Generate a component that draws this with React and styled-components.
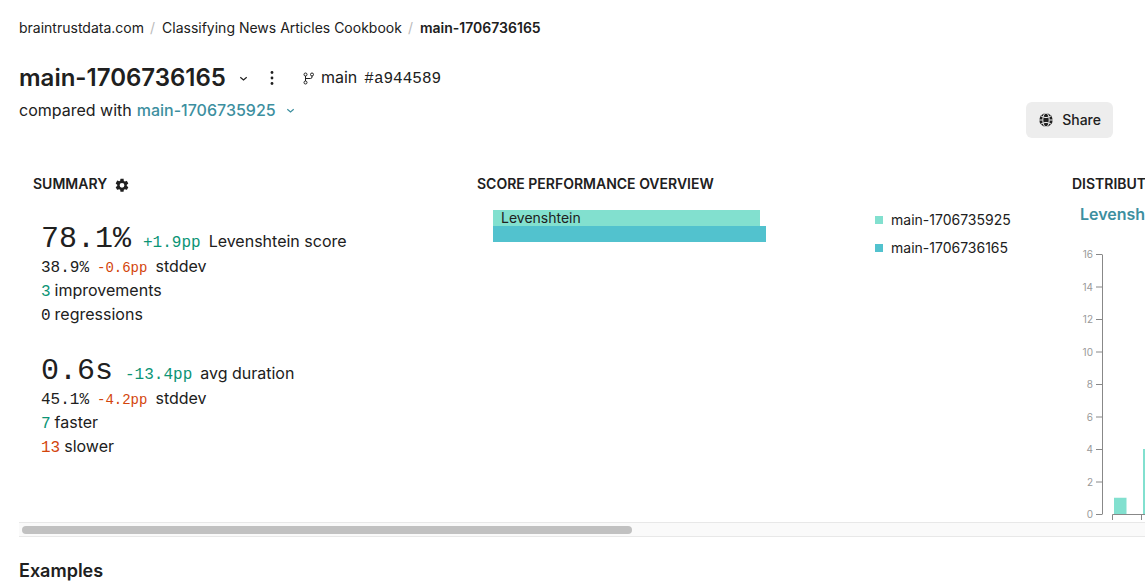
import React from "react";
import styled, { createGlobalStyle } from "styled-components";

const Global = createGlobalStyle`
  *, *::before, *::after { box-sizing: border-box; }
  body {
    margin: 0;
    background: #fff;
    color: #202020;
    font-family: Inter, sans-serif;
    font-size: 16px;
    line-height: 24px;
    overflow-x: hidden;
  }
  h1, h2, h3, p, ol, ul { margin: 0; padding: 0; }
  button { font: inherit; color: inherit; border: 0; background: none; padding: 0; cursor: pointer; }
  svg { display: block; flex: none; }
`;

const Page = styled.main`
  padding: 16px 0 0 19px;
`;

const Breadcrumb = styled.ol`
  display: flex;
  gap: 6px;
  list-style: none;
  font-size: 14px;
  line-height: 24px;
`;

const Crumb = styled.li`
  display: flex;
  gap: 7px;
  font-weight: ${(p) => (p.$current ? 600 : 400)};
  a { color: inherit; text-decoration: none; }
  &:not(:first-child)::before { content: "/"; color: #bbb; font-weight: 400; }
`;

const Header = styled.header`
  display: flex;
  justify-content: space-between;
  align-items: flex-end;
  padding: 20px 32px 0 0;
`;

const TitleRow = styled.div`
  display: flex;
  align-items: center;
  height: 36px;
`;

const Title = styled.h1`
  margin-right: 4px;
  font-size: 24px;
  line-height: 32px;
  font-weight: 600;
`;

const IconButton = styled.button`
  display: flex;
  align-items: center;
  justify-content: center;
  width: 28px;
  height: 28px;
`;

const Branch = styled.div`
  display: flex;
  align-items: center;
  gap: 6px;
  margin-left: 17px;
`;

const BranchText = styled.span`
  display: flex;
  align-items: baseline;
  gap: 7px;
`;

const Mono = styled.span`
  font-family: "Liberation Mono", monospace;
  font-size: ${(p) => p.$size || 16}px;
  color: ${(p) => ({ good: "#0b9475", bad: "#d3450c" })[p.$tone] || "inherit"};
`;

const Compared = styled.div`
  display: flex;
  align-items: center;
  gap: 5px;
  height: 28px;
  margin-bottom: 14px;
`;

const CompareButton = styled.button`
  display: flex;
  align-items: center;
  gap: 10px;
  color: #3d8f9f;
  font-weight: 500;
`;

const ShareButton = styled.button`
  display: flex;
  align-items: center;
  gap: 9px;
  height: 36px;
  padding: 0 12px 0 13px;
  border-radius: 6px;
  background: #ededed;
  font-size: 14px;
  font-weight: 500;
`;

const Scroller = styled.section`
  display: flex;
  height: 384px;
  padding: 34px 0 0 14px;
  overflow-x: auto;
  overflow-y: hidden;
  scrollbar-width: none;
`;

const Panel = styled.div`
  flex: none;
  width: ${(p) => p.$width}px;
`;

const PanelTitle = styled.h2`
  display: flex;
  align-items: center;
  gap: 7px;
  font-size: 14px;
  line-height: 24px;
  font-weight: 600;
`;

const Metric = styled.div`
  padding: 28px 8px 0;
  & + & { padding-top: 30px; }
`;

const MetricLine = styled.p`
  display: flex;
  align-items: baseline;
  gap: ${(p) => p.$gap}px;
  height: ${(p) => p.$height || 24}px;
  line-height: ${(p) => p.$height || 24}px;
`;

const Overview = styled.div`
  display: flex;
  gap: 32px;
  padding: 14px 16px 0;
`;

const Bars = styled.div`
  width: 350px;
`;

const Bar = styled.div`
  height: 16px;
  padding-left: 8px;
  background: ${(p) => p.$color};
  font-size: 14px;
  line-height: 16px;
`;

const Legend = styled.ul`
  display: grid;
  align-content: start;
  gap: 4px;
  list-style: none;
  font-size: 14px;
  line-height: 24px;
  margin-top: -2px;
`;

const LegendItem = styled.li`
  display: flex;
  align-items: center;
  gap: 8px;
  &::before { content: ""; width: 8px; height: 8px; background: ${(p) => p.$color}; }
`;

const ChartTitle = styled.h3`
  padding: 6px 8px 16px;
  font-size: 16px;
  line-height: 24px;
  font-weight: 600;
  color: #3d8f9f;
`;

const AxisLabel = styled.text`
  font-size: 10px;
  fill: #999;
  text-anchor: end;
`;

const ScrollTrack = styled.div`
  height: 15px;
  padding: 3px;
  background: #fafafa;
  border: solid #e8e8e8;
  border-width: 1px 0;
`;

const ScrollThumb = styled.div`
  width: 54.5%;
  height: 8px;
  border-radius: 4px;
  background: #c1c1c1;
`;

const SectionTitle = styled.h2`
  padding: 20px 0;
  font-size: 18px;
  line-height: 28px;
  font-weight: 600;
`;

const Chevron = () => (
  <svg width="9" height="9" viewBox="0 0 9 9" fill="none" stroke="currentColor" strokeWidth="1.2">
    <path d="M1.3 3.2l3.2 2.8 3.2-2.8" />
  </svg>
);

const Dots = () => (
  <svg width="4" height="16" viewBox="0 0 4 16" fill="currentColor">
    <circle cx="2" cy="2.5" r="1.4" />
    <circle cx="2" cy="8" r="1.4" />
    <circle cx="2" cy="13.5" r="1.4" />
  </svg>
);

const BranchIcon = () => (
  <svg width="12" height="16" viewBox="0 0 12 16" fill="none" stroke="currentColor">
    <circle cx="2.5" cy="4.5" r="1.5" />
    <circle cx="9" cy="4.5" r="1.5" />
    <circle cx="2.5" cy="12.5" r="1.5" />
    <path d="M2.5 6v5M9 6v1q0 1.5-1.5 1.5h-5" />
  </svg>
);

const Gear = () => (
  <svg width="16" height="18" viewBox="0 -2.5 24 27" fill="currentColor">
    <path
      transform="translate(0 1)"
      d="M19.14 12.94c.04-.3.06-.61.06-.94s-.02-.64-.07-.94l2.03-1.58a.49.49 0 0 0 .12-.61l-1.92-3.32a.49.49 0 0 0-.59-.22l-2.39.96a7 7 0 0 0-1.62-.94l-.36-2.54A.48.48 0 0 0 13.92 2h-3.84a.48.48 0 0 0-.47.41l-.36 2.54c-.59.24-1.13.57-1.62.94l-2.39-.96a.48.48 0 0 0-.59.22L2.74 8.87a.48.48 0 0 0 .12.61l2.03 1.58a6 6 0 0 0 0 1.88l-2.03 1.58a.49.49 0 0 0-.12.61l1.92 3.32c.12.22.37.29.59.22l2.39-.96c.5.38 1.03.7 1.62.94l.36 2.54c.05.24.24.41.48.41h3.84c.24 0 .44-.17.47-.41l.36-2.54a7 7 0 0 0 1.62-.94l2.39.96c.22.08.47 0 .59-.22l1.92-3.32a.48.48 0 0 0-.12-.61zM12 15.6a3.6 3.6 0 1 1 0-7.2 3.6 3.6 0 0 1 0 7.2"
    />
  </svg>
);

const Globe = () => (
  <svg width="14" height="14" viewBox="0 0 14 14">
    <circle cx="7" cy="7" r="6.7" fill="currentColor" />
    <g fill="none" stroke="#ededed" strokeWidth="1">
      <path d="M0 7h3.5M10.5 7H14M1.8 2.8Q7 6.4 12.2 2.8M1.8 11.2Q7 7.6 12.2 11.2" />
      <ellipse cx="7" cy="7" rx="3.2" ry="7" />
    </g>
  </svg>
);

const MINT = "#82e0cf";
const TEAL = "#52c2ce";
const BASE = 272;
const STEP = 16.25;
const TICKS = [0, 2, 4, 6, 8, 10, 12, 14, 16];
const BINS = [1, 4];

const Histogram = () => (
  <svg width="400" height="280" viewBox="0 0 400 280">
    {BINS.map((n, i) => (
      <rect key={i} x={42 + i * 29} y={BASE - n * STEP} width="12.5" height={n * STEP} fill={MINT} />
    ))}
    <path d="M30.5 12.5V272.5M40.5 278V272.5H400M69.5 272V278" fill="none" stroke="#888" />
    {TICKS.map((t) => (
      <g key={t}>
        <path d={`M24 ${BASE + 0.5 - t * STEP}H30`} stroke="#888" />
        <AxisLabel x="21" y={BASE + 4 - t * STEP}>{t}</AxisLabel>
      </g>
    ))}
  </svg>
);

export default function App() {
  return (
    <Page>
      <Global />
      <nav aria-label="Breadcrumb">
        <Breadcrumb>
          <Crumb><a href="#org">braintrustdata.com</a></Crumb>
          <Crumb><a href="#project">Classifying News Articles Cookbook</a></Crumb>
          <Crumb $current>main-1706736165</Crumb>
        </Breadcrumb>
      </nav>
      <Header>
        <div>
          <TitleRow>
            <Title>main-1706736165</Title>
            <IconButton aria-label="Switch experiment"><Chevron /></IconButton>
            <IconButton aria-label="More actions"><Dots /></IconButton>
            <Branch>
              <BranchIcon />
              <BranchText>main <Mono>#a944589</Mono></BranchText>
            </Branch>
          </TitleRow>
          <Compared>
            compared with
            <CompareButton>main-1706735925 <Chevron /></CompareButton>
          </Compared>
        </div>
        <ShareButton><Globe />Share</ShareButton>
      </Header>
      <Scroller>
        <Panel $width={444}>
          <PanelTitle>
            SUMMARY
            <Gear />
          </PanelTitle>
          <Metric>
            <MetricLine $gap={12} $height={30}>
              <Mono $size={30}>78.1%</Mono>
              <MetricLine as="span" $gap={8}><Mono $tone="good">+1.9pp</Mono>Levenshtein score</MetricLine>
            </MetricLine>
            <MetricLine $gap={8}><Mono>38.9%</Mono><Mono $size={14} $tone="bad">-0.6pp</Mono>stddev</MetricLine>
            <MetricLine $gap={4}><Mono $tone="good">3</Mono>improvements</MetricLine>
            <MetricLine $gap={4}><Mono>0</Mono>regressions</MetricLine>
          </Metric>
          <Metric>
            <MetricLine $gap={12} $height={30}>
              <Mono $size={30}>0.6s</Mono>
              <MetricLine as="span" $gap={8}><Mono $tone="good">-13.4pp</Mono>avg duration</MetricLine>
            </MetricLine>
            <MetricLine $gap={8}><Mono>45.1%</Mono><Mono $size={14} $tone="bad">-4.2pp</Mono>stddev</MetricLine>
            <MetricLine $gap={4}><Mono $tone="good">7</Mono>faster</MetricLine>
            <MetricLine $gap={4}><Mono $tone="bad">13</Mono>slower</MetricLine>
          </Metric>
        </Panel>
        <Panel $width={595}>
          <PanelTitle>SCORE PERFORMANCE OVERVIEW</PanelTitle>
          <Overview>
            <Bars>
              <Bar $color={MINT} style={{ width: "76.2%" }}>Levenshtein</Bar>
              <Bar $color={TEAL} style={{ width: "78.1%" }} />
            </Bars>
            <Legend>
              <LegendItem $color={MINT}>main-1706735925</LegendItem>
              <LegendItem $color={TEAL}>main-1706736165</LegendItem>
            </Legend>
          </Overview>
        </Panel>
        <Panel $width={410}>
          <PanelTitle>DISTRIBUTION</PanelTitle>
          <ChartTitle>Levenshtein</ChartTitle>
          <Histogram />
        </Panel>
      </Scroller>
      <ScrollTrack><ScrollThumb /></ScrollTrack>
      <SectionTitle>Examples</SectionTitle>
    </Page>
  );
}
